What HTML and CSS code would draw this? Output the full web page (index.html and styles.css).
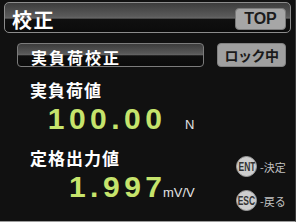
FILE: index.html
```html
<!DOCTYPE html>
<html lang="ja">
<head>
<meta charset="utf-8">
<link rel="stylesheet" href="styles.css">
</head>
<body>
<div class="screen">
  <header class="titlebar">
    <span class="title">校正</span>
    <div class="topbtn">TOP</div>
  </header>
  <div class="subrow">
    <div class="mode">実負荷校正</div>
    <div class="lock">ロック中</div>
  </div>
  <div class="main">
    <div class="values">
      <div class="label label-first">実負荷値</div>
      <div class="valrow valrow-first">
        <span class="num">100.0<span class="num-last">0</span></span><span class="unit unit-n">N</span>
      </div>
      <div class="label label-second">定格出力値</div>
      <div class="valrow valrow-second">
        <span class="num">1.99<span class="num-last">7</span></span><span class="unit unit-mv">mV/V</span>
      </div>
    </div>
    <div class="keys">
      <div class="key"><span class="key-ico"><span class="key-txt">ENT</span></span><span class="key-lbl">-決定</span></div>
      <div class="key key-second"><span class="key-ico"><span class="key-txt">ESC</span></span><span class="key-lbl">-戻る</span></div>
    </div>
  </div>
</div>
</body>
</html>
```
FILE: styles.css
```css
* { box-sizing: border-box; margin: 0; padding: 0; }
html, body { background: #111111; }
body {
  width: 296px;
  height: 222px;
  overflow: hidden;
  font-family: "Noto Sans CJK JP", sans-serif;
}
.screen {
  width: 296px;
  height: 222px;
  border-bottom: 1px solid #9c9c9c;
  border-right: 1px solid #3a3a3a;
  display: flex;
  flex-direction: column;
}
.titlebar {
  margin: 2px 0 0 4px;
  width: 287px;
  height: 31px;
  border: 1px solid #8c8c8c;
  border-radius: 5px;
  background: linear-gradient(to bottom, #3c3c3c 0%, #5a5a5a 46%, #676767 52%, #101010 56%, #0b0b0b 100%);
  display: flex;
  justify-content: space-between;
  align-items: flex-start;
  padding: 7px 4px 0 7px;
}
.title {
  font-size: 20px;
  line-height: 20px;
  font-weight: 700;
  color: #ffffff;
  letter-spacing: 1.5px;
}
.topbtn {
  margin-top: -2px;
  width: 51px;
  height: 22px;
  background: #a6a6a6;
  border: 1px solid #7a7a7a;
  border-radius: 4px;
  font: bold 16px "Liberation Sans", sans-serif;
  color: #1c1c1c;
  display: flex;
  align-items: center;
  justify-content: center;
}
.subrow {
  margin-top: 10px;
  display: flex;
  padding-left: 17px;
  gap: 13px;
}
.mode {
  width: 187px;
  height: 24px;
  border: 1px solid #7c7c7c;
  border-radius: 4px;
  background: linear-gradient(to bottom, #3c3c3c 0%, #585858 42%, #626262 48%, #101010 54%, #0b0b0b 100%);
  padding: 3px 0 0 13px;
  font-size: 16px;
  line-height: 20px;
  font-weight: 700;
  letter-spacing: 2px;
  color: #ffffff;
}
.lock {
  width: 69px;
  height: 24px;
  background: #a0a0a0;
  border: 1px solid #828282;
  border-radius: 4px;
  font-size: 14px;
  font-weight: 700;
  letter-spacing: -0.5px;
  color: #1a1a1a;
  display: flex;
  align-items: center;
  justify-content: center;
}
.main {
  flex: 1;
  display: flex;
}
.values {
  flex: 1;
  padding-left: 30px;
}
.label {
  font-size: 17px;
  line-height: 20px;
  font-weight: 700;
  letter-spacing: 1px;
  color: #ffffff;
}
.label-first { margin-top: 13px; }
.label-second { margin-top: 14px; }
.valrow {
  display: flex;
  align-items: baseline;
}
.valrow-first { margin-top: 4px; }
.valrow-second { margin-top: 4px; }
.num {
  width: 132px;
  text-align: right;
  font-family: "Liberation Sans", sans-serif;
  font-weight: 700;
  font-size: 30px;
  line-height: 30px;
  letter-spacing: 4.5px;
  color: #c6e46c;
}
.num-last { letter-spacing: 0; }
.unit {
  font-family: "Liberation Sans", sans-serif;
  font-size: 13px;
  color: #e4e4e4;
}
.unit-n { margin-left: 23px; }
.unit-mv { margin-left: 1px; }
.keys {
  width: 59px;
  padding-top: 89px;
  display: flex;
  flex-direction: column;
}
.key {
  display: flex;
  align-items: center;
  gap: 3px;
}
.key-second { margin-top: 13px; }
.key-ico {
  width: 21px;
  height: 21px;
  border-radius: 50%;
  background: #cecece;
  border: 1px solid #9a9a9a;
  display: flex;
  align-items: center;
  justify-content: center;
  overflow: hidden;
}
.key-txt {
  font: bold 13px "Liberation Sans", sans-serif;
  color: #333333;
  transform: scaleX(0.65);
}
.key-lbl {
  font-size: 11px;
  line-height: 12px;
  color: #c2c2c2;
}
```
